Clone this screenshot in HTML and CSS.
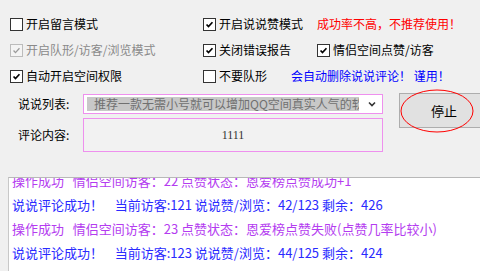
FILE: index.html
```html
<!DOCTYPE html>
<html lang="zh-CN">

<head>
  <meta charset="UTF-8">
  <meta name="viewport" content="width=device-width, initial-scale=1.0">
  <title>说说助手</title>

  <link rel="stylesheet" href="styles.css">
</head>

<body>
  <div id="options">
    <div class="opt-row">
      <label class="opt col-a"><span class="box"></span>开启留言模式</label>
      <label class="opt col-b"><span class="box checked"><svg viewBox="0 0 13 13"><path d="M3 6.5 L5.3 9 L10 3.8" /></svg></span>开启说说赞模式</label>
      <span class="note warn">成功率不高，不推荐使用！</span>
    </div>
    <div class="opt-row">
      <label class="opt col-a disabled"><span class="box checked"><svg viewBox="0 0 13 13"><path d="M3 6.5 L5.3 9 L10 3.8" /></svg></span>开启队形/访客/浏览模式</label>
      <label class="opt col-b"><span class="box checked"><svg viewBox="0 0 13 13"><path d="M3 6.5 L5.3 9 L10 3.8" /></svg></span>关闭错误报告</label>
      <label class="opt"><span class="box checked"><svg viewBox="0 0 13 13"><path d="M3 6.5 L5.3 9 L10 3.8" /></svg></span>情侣空间点赞/访客</label>
    </div>
    <div class="opt-row">
      <label class="opt col-a"><span class="box checked"><svg viewBox="0 0 13 13"><path d="M3 6.5 L5.3 9 L10 3.8" /></svg></span>自动开启空间权限</label>
      <label class="opt col-c"><span class="box"></span>不要队形</label>
      <span class="note info">会自动删除说说评论！ 谨用！</span>
    </div>
  </div>

  <div id="form-area">
    <div id="fields">
      <div class="field">
        <span class="field-label">说说列表:</span>
        <div class="combo">
          <span class="combo-text">推荐一款无需小号就可以增加QQ空间真实人气的软件</span>
          <svg class="combo-arrow" viewBox="0 0 10 10"><path d="M2 3.5 L5 6.5 L8 3.5" /></svg>
        </div>
      </div>
      <div class="field">
        <span class="field-label">评论内容:</span>
        <div class="textbox">1111</div>
      </div>
    </div>
    <div id="action">
      <button id="stop-btn">停止</button>
      <svg id="mark" viewBox="0 0 74 44"><ellipse cx="37" cy="22" rx="36" ry="21" /></svg>
    </div>
  </div>

  <div id="log">
    <div id="log-inner">
      <div class="log-line purple">操作成功&nbsp;&nbsp;&nbsp;情侣空间访客：22 点赞状态：恩爱榜点赞成功+1</div>
      <div class="log-line blue">说说评论成功！&nbsp;&nbsp;&nbsp;&nbsp;当前访客:121 说说赞/浏览：42/123 剩余：426</div>
      <div class="log-line purple">操作成功&nbsp;&nbsp;&nbsp;情侣空间访客：23 点赞状态：恩爱榜点赞失败(点赞几率比较小)</div>
      <div class="log-line blue">说说评论成功！&nbsp;&nbsp;&nbsp;&nbsp;当前访客:123 说说赞/浏览：44/125 剩余：424</div>
    </div>
  </div>
</body>

</html>
```

FILE: styles.css
```css
html, body {
  margin: 0;
  height: 100%;
  overflow: hidden;
}

body {
  font-family: "Noto Sans CJK SC", "Noto Sans", sans-serif;
  font-size: 12px;
  color: #000000;
  background-color: #f0f0f0;
}

#options {
  padding: 17px 0 0 10px;
  display: flex;
  flex-direction: column;
  gap: 12px;
}

.opt-row {
  display: flex;
  align-items: center;
  height: 14px;
  white-space: nowrap;
}

.opt {
  display: flex;
  align-items: center;
  gap: 3px;
  line-height: 14px;
}

.col-a {
  width: 193px;
}

.col-b {
  width: 114px;
}

.col-c {
  width: 88px;
}

.box {
  width: 11px;
  height: 11px;
  border: 1px solid #333333;
  background-color: #ffffff;
  display: flex;
}

.box svg {
  width: 11px;
  height: 11px;
}

.box path {
  fill: none;
  stroke: #000000;
  stroke-width: 2;
}

.disabled {
  color: #8a8a8a;
}

.disabled .box {
  border-color: #bcbcbc;
  background-color: #f4f4f4;
}

.disabled .box path {
  stroke: #9a9a9a;
  stroke-width: 1.5;
}

.note {
  line-height: 14px;
}

.warn {
  color: #ff0000;
}

.info {
  color: #0000ff;
}

#form-area {
  display: flex;
  margin-top: 11px;
  padding-left: 18px;
}

#fields {
  display: flex;
  flex-direction: column;
  gap: 4px;
}

.field {
  display: flex;
  align-items: center;
}

.field-label {
  width: 65px;
  line-height: 14px;
}

.combo {
  width: 298px;
  height: 18px;
  border: 1px solid #ee90ee;
  background-color: #ffffff;
  display: flex;
  align-items: center;
  overflow: hidden;
}

.combo-text {
  flex: 1;
  margin: 0 8px 0 3px;
  padding-left: 7px;
  background-color: #c8c8c8;
  color: #707070;
  line-height: 14px;
  white-space: nowrap;
  overflow: hidden;
}

.combo-arrow {
  width: 10px;
  height: 10px;
  margin-right: 5px;
  flex-shrink: 0;
}

.combo-arrow path {
  fill: none;
  stroke: #333333;
  stroke-width: 1.6;
}

.textbox {
  width: 298px;
  height: 32px;
  border: 1px solid #ee90ee;
  background-color: #f2f2f2;
  display: flex;
  align-items: center;
  justify-content: center;
  font-family: "Liberation Serif", serif;
  font-size: 12px;
  color: #333333;
}

#action {
  position: relative;
  margin-left: 16px;
  margin-top: -1px;
}

#stop-btn {
  width: 90px;
  height: 35px;
  border: 1px solid #adadad;
  background-color: #e1e1e1;
  font-family: "Noto Sans CJK SC", sans-serif;
  font-size: 13px;
  padding: 0;
  color: #000000;
}

#mark {
  position: absolute;
  left: 1px;
  top: -4px;
  width: 74px;
  height: 44px;
}

#mark ellipse {
  fill: none;
  stroke: #ff0000;
  stroke-width: 1;
}

#log {
  margin: 25px 0 0 8px;
  height: 94px;
  background-color: #ffffff;
  border-top: 1px solid #b8b8b8;
  border-left: 1px solid #c8c8c8;
  overflow: hidden;
}

#log-inner {
  margin-top: -9px;
  padding-left: 3px;
}

.log-line {
  font-size: 13px;
  line-height: 24px;
  white-space: nowrap;
}

.purple {
  color: #b43cf0;
}

.blue {
  color: #2a2aff;
}
```
